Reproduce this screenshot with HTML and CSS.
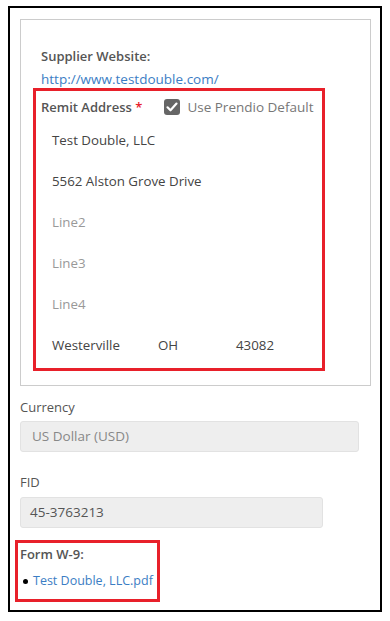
FILE: index.html
```html
<!DOCTYPE html>
<html lang="en">
<head>
  <meta charset="UTF-8">
  <title>Supplier Details</title>
  <link rel="stylesheet" href="styles.css">
</head>
<body>
  <div class="frame">
    <div class="card">
      <div class="label strong">Supplier Website:</div>
      <a class="link site" href="#">http://www.testdouble.com/</a>

      <!-- Remit address block -->
      <div class="highlight remit">
        <div class="remit-head">
          <span class="label strong">Remit Address <span class="req">*</span></span>
          <span class="check">
            <svg width="16" height="16" viewBox="0 0 16 16">
              <rect x="0" y="0" width="16" height="16" rx="3" fill="#666"/>
              <path d="M3.5 8.3 L6.5 11.3 L12.5 4.6" fill="none" stroke="#fff" stroke-width="2.2" stroke-linecap="round" stroke-linejoin="round"/>
            </svg>
            <span class="check-text">Use Prendio Default</span>
          </span>
        </div>
        <div class="addr">Test Double, LLC</div>
        <div class="addr">5562 Alston Grove Drive</div>
        <div class="addr empty">Line2</div>
        <div class="addr empty">Line3</div>
        <div class="addr empty">Line4</div>
        <div class="addr city">
          <span>Westerville</span>
          <span>OH</span>
          <span>43082</span>
        </div>
      </div>
    </div>

    <div class="label field-label">Currency</div>
    <div class="field currency">US Dollar (USD)</div>

    <div class="label field-label fid-label">FID</div>
    <div class="field fid">45-3763213</div>

    <!-- W-9 -->
    <div class="highlight w9">
      <div class="label strong">Form W-9:</div>
      <div class="file"><span class="dot"></span><a class="link" href="#">Test Double, LLC.pdf</a></div>
    </div>
  </div>
</body>
</html>
```

FILE: styles.css
```css
body {
  margin: 0;
  background: #fff;
  font-family: "Open Sans", Arial, sans-serif;
  font-size: 13px;
  color: #555;
}
.frame {
  margin: 6px 8px;
  height: 606px;
  box-sizing: border-box;
  border: 2px solid #000;
  padding: 11px 9px 9px 10px;
}
.card {
  border: 1px solid #ccc;
  padding: 26px 0 14px 12px;
}
.label {
  line-height: 20px;
  color: #555;
}
.strong {
  font-weight: 600;
}
.card > .label {
  padding-left: 8px;
}
.link {
  color: #3b7dc4;
  text-decoration: none;
}
.site {
  display: block;
  line-height: 18px;
  margin-top: 4px;
  padding-left: 8px;
  font-size: 13.5px;
}
.highlight {
  border: 3px solid #e8202a;
  box-sizing: border-box;
}
.remit {
  width: 292px;
  padding: 6px 0 2px 5px;
}
.remit-head {
  display: flex;
  align-items: center;
  height: 20px;
  margin-bottom: 3px;
}
.req {
  color: #e8202a;
}
.check {
  display: flex;
  align-items: center;
  margin-left: 22px;
}
.check svg {
  display: block;
}
.check-text {
  margin-left: 7px;
  font-size: 13.5px;
  color: #777;
}
.addr {
  height: 41px;
  line-height: 41px;
  padding-left: 11px;
  font-size: 13.3px;
  color: #444;
}
.addr.empty {
  color: #999;
}
.city {
  display: grid;
  grid-template-columns: 106px 78px auto;
}
.field-label {
  margin-top: 11px;
}
.fid-label {
  margin-top: 20px;
}
.field {
  box-sizing: border-box;
  height: 31px;
  line-height: 29px;
  background: #eee;
  border: 1px solid #e2e2e2;
  border-radius: 3px;
  font-size: 13.5px;
}
.currency {
  width: 339px;
  margin-top: 4px;
  padding-left: 11px;
  color: #888;
}
.fid {
  width: 303px;
  margin-top: 5px;
  padding-left: 9px;
  color: #555;
}
.w9 {
  width: 145px;
  margin: 12px 0 0 -5px;
  padding: 1px 0 8px 2px;
  white-space: nowrap;
}
.file {
  display: flex;
  align-items: center;
  margin-top: 7px;
  line-height: 20px;
  font-size: 12.5px;
}
.dot {
  width: 5px;
  height: 5px;
  border-radius: 50%;
  background: #000;
  margin: 0 5px 0 3px;
}
```
